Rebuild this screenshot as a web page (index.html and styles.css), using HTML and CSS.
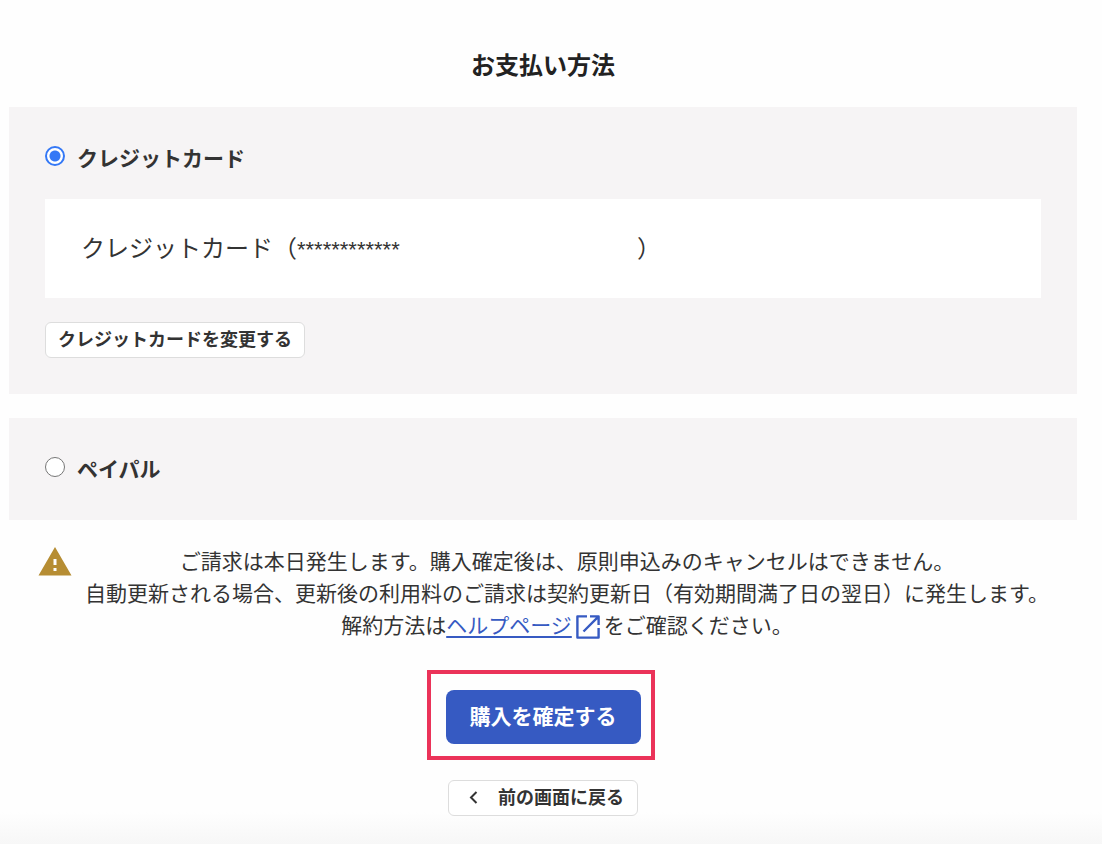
FILE: index.html
```html
<!DOCTYPE html>
<html lang="ja">
<head>
    <meta charset="UTF-8">
    <meta name="viewport" content="width=device-width, initial-scale=1.0">
    <title>お支払い方法</title>
    <link rel="stylesheet" href="styles.css">
</head>
<body>
    <form class="payment">
        <h1 class="title">お支払い方法</h1>

        <section class="panel">
            <label class="method">
                <input type="radio" name="method" value="card" checked>
                クレジットカード
            </label>
            <div class="card-info">クレジットカード（<span class="card-number">************</span>）</div>
            <button type="button" class="small-button">クレジットカードを変更する</button>
        </section>

        <section class="panel">
            <label class="method">
                <input type="radio" name="method" value="paypal">
                ペイパル
            </label>
        </section>

        <div class="notice">
            <svg class="warning-icon" viewBox="0 0 24 24" aria-hidden="true">
                <path fill="#b68d33" d="M1 21h22L12 2 1 21zm12-3h-2v-2h2v2zm0-4h-2v-4h2v4z"/>
            </svg>
            <p class="notice-text">
                ご請求は本日発生します。購入確定後は、原則申込みのキャンセルはできません。<br>
                自動更新される場合、更新後の利用料のご請求は契約更新日（有効期間満了日の翌日）に発生します。<br>
                解約方法は<a class="help-link" href="#"><span class="help-label">ヘルプページ</span><svg class="link-icon" viewBox="0 0 24 24" aria-hidden="true"><path fill="none" stroke="#365ac2" stroke-width="2.4" stroke-linejoin="round" d="M11 1.4H1.4v21.2h21.2V13M14 1.4h8.6V10M22.6 1.4L7.5 16.5"/></svg></a>をご確認ください。
            </p>
        </div>

        <div class="actions">
            <div class="submit-wrap">
                <button type="submit" class="submit-button">購入を確定する</button>
            </div>
            <button type="button" class="small-button back-button">
                <svg class="back-icon" viewBox="0 0 9 14" aria-hidden="true">
                    <path fill="none" stroke="#333" stroke-width="2" d="M7.5 3L2 8.500l5.500 5.500"/>
                </svg>
                前の画面に戻る
            </button>
        </div>
    </form>
</body>
</html>
```
FILE: styles.css
```css
* {
    box-sizing: border-box;
}

body {
    margin: 0;
    min-height: 100vh;
    padding: 46px 25px 28px 9px;
    background: linear-gradient(to top, #f7f7f7, #fefefe 32px);
    color: #333;
    font-family: "Noto Sans CJK JP", "Liberation Sans", sans-serif;
    font-size: 21px;
    line-height: 32px;
}

button {
    font-family: inherit;
    font-weight: bold;
    cursor: pointer;
}

.title {
    margin: 0 0 25px;
    color: #222;
    font-size: 24px;
    line-height: 36px;
    text-align: center;
}

.panel {
    margin-bottom: 24px;
    padding: 35px 36px 36px;
    background: #f6f4f5;
}

.method {
    display: flex;
    align-items: center;
    gap: 12px;
    font-weight: bold;
    line-height: 31px;
}

.method input {
    appearance: none;
    width: 20px;
    height: 20px;
    margin: 0 0 4px;
    border: 1px solid #767676;
    border-radius: 50%;
    background: #fff;
}

.method input:checked {
    border: 2px solid #3478f6;
    background: radial-gradient(circle, #3478f6 5px, #fff 6px);
}

.card-info {
    margin: 26px 0 24px;
    padding: 30px 36px 33px;
    background: #fff;
    font-size: 24px;
    line-height: 36px;
}

.card-number {
    display: inline-block;
    width: 340px;
    font-family: "Liberation Sans", sans-serif;
    font-size: 22px;
    line-height: 24px;
}

.small-button {
    display: block;
    height: 36px;
    padding: 0 12px 4px;
    border: 1px solid #ddd;
    border-radius: 6px;
    background: #fff;
    color: #333;
    font-size: 18px;
    line-height: 30px;
}

.notice {
    display: flex;
    justify-content: center;
    gap: 12px;
}

.warning-icon {
    flex: none;
    width: 36px;
    height: 36px;
}

.notice-text {
    margin: 0;
    text-align: center;
}

.help-link {
    color: #365ac2;
    text-decoration: none;
}

.help-label {
    text-decoration: underline;
    text-decoration-thickness: 2px;
    text-underline-offset: 3px;
}

.link-icon {
    width: 24px;
    height: 24px;
    margin: 0 4px;
    vertical-align: -6px;
}

.actions {
    display: flex;
    flex-direction: column;
    align-items: center;
    gap: 36px;
    margin-top: 50px;
}

.submit-wrap {
    position: relative;
}

/* red frame around the confirm button */
.submit-wrap::before {
    content: "";
    position: absolute;
    inset: -20px -14px -16px -19px;
    border: 4px solid #eb3359;
    pointer-events: none;
}

.submit-button {
    display: block;
    height: 54px;
    padding: 0 24px 4px;
    border: 0;
    border-radius: 8px;
    background: #365ac2;
    color: #fff;
    font-size: 21px;
    line-height: 50px;
}

.back-button {
    display: flex;
    align-items: center;
    gap: 20px;
    padding: 0 13px 4px 20px;
}

.back-icon {
    width: 9px;
    height: 14px;
    overflow: visible;
}
```
